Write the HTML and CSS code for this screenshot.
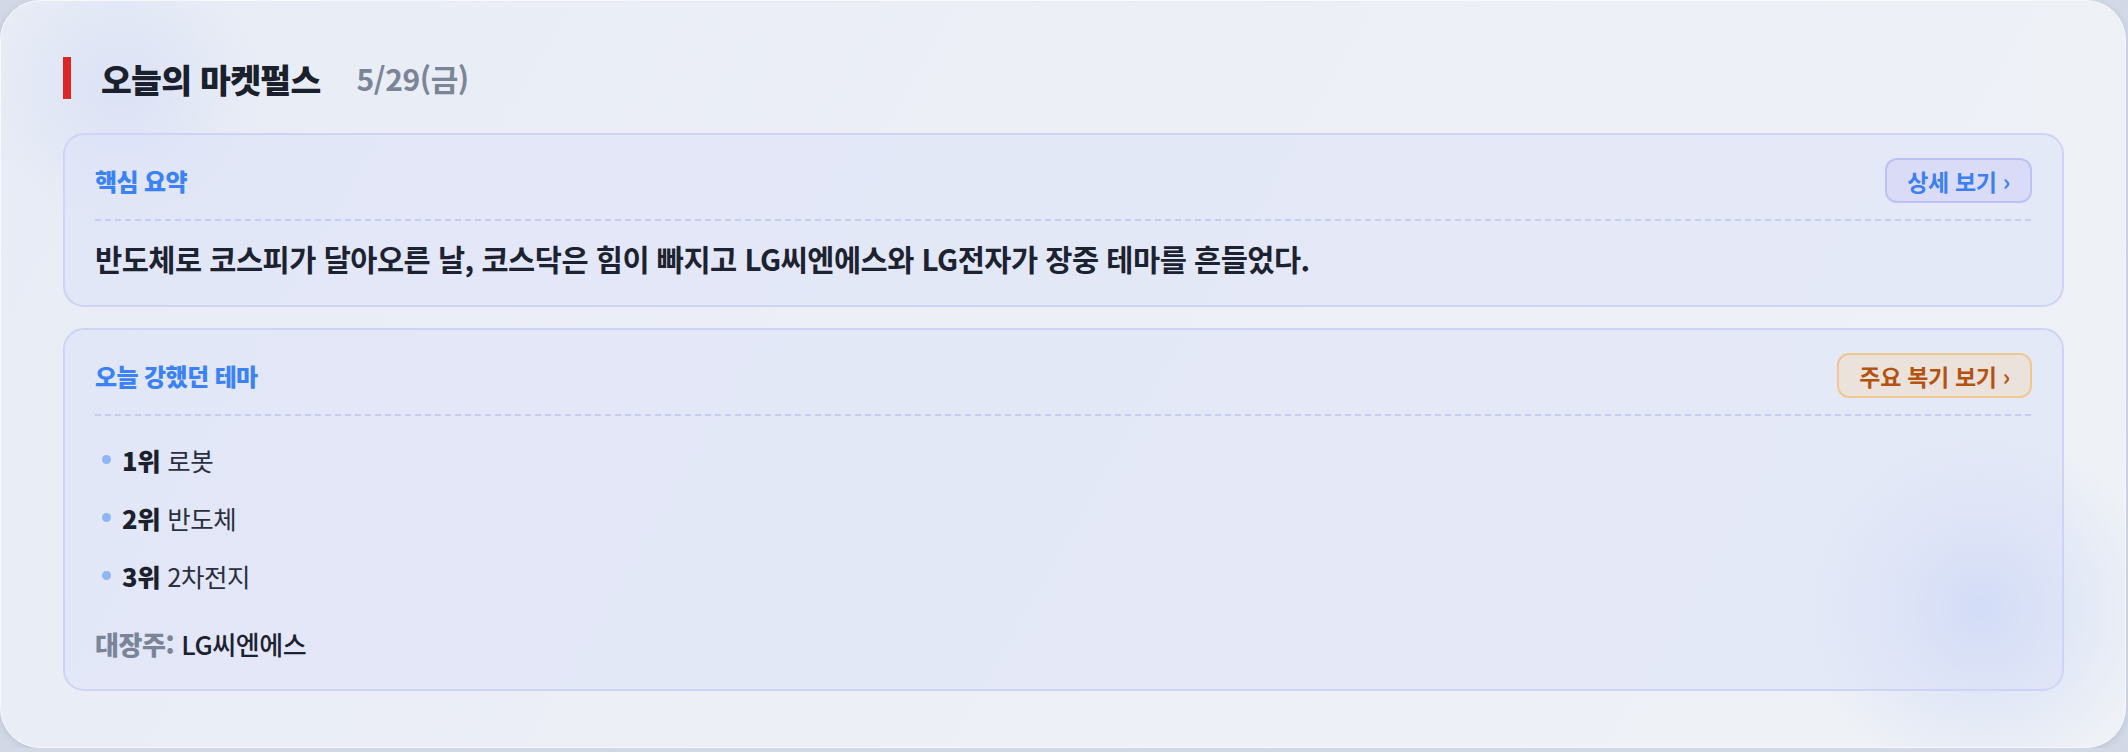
FILE: index.html
```html
<!DOCTYPE html>
<html lang="ko">
<head>
  <meta charset="UTF-8" />
  <meta name="viewport" content="width=device-width, initial-scale=1.0" />
  <title>오늘의 마켓펄스</title>
  <link rel="stylesheet" href="styles.css">
</head>
<body>
  <div class="pulse">
    <!-- 제목 -->
    <header class="pulse-head">
      <span class="mark"></span>
      <h1>오늘의 마켓펄스</h1>
      <span class="date">5/29(금)</span>
    </header>

    <!-- 핵심 요약 -->
    <section class="box box-summary">
      <div class="box-head">
        <h2>핵심 요약</h2>
        <a class="chip chip-blue" href="#">상세 보기 ›</a>
      </div>
      <p class="summary">반도체로 코스피가 달아오른 날, 코스닥은 힘이 빠지고 LG씨엔에스와 LG전자가 장중 테마를 흔들었다.</p>
    </section>

    <!-- 강세 테마 -->
    <section class="box box-theme">
      <div class="box-head">
        <h2>오늘 강했던 테마</h2>
        <a class="chip chip-amber" href="#">주요 복기 보기 ›</a>
      </div>
      <ul class="rank">
        <li><b>1위</b> 로봇</li>
        <li><b>2위</b> 반도체</li>
        <li><b>3위</b> 2차전지</li>
      </ul>
      <p class="leader"><span>대장주:</span> LG씨엔에스</p>
    </section>
  </div>
</body>
</html>
```

FILE: styles.css
```css
* { box-sizing: border-box; }
body {
  margin: 0;
  background: #d2d8e5;
  font-family: "Noto Sans CJK KR", "Noto Sans", sans-serif;
  color: #1c2230;
}
.pulse {
  width: 2126px;
  height: 748px;
  padding: 56px 61px 0 62px;
  border: 1px solid #f6f8fc;
  border-radius: 40px;
  background:
    radial-gradient(circle at 1980px 607px, rgba(196, 211, 246, 0.9) 0, rgba(210, 221, 247, 0.45) 90px, rgba(236, 239, 246, 0) 175px),
    radial-gradient(circle at 120px 90px, rgba(214, 222, 245, 0.7) 0, rgba(230, 235, 247, 0) 140px),
    linear-gradient(120deg, #e8ecf6 0%, #edf0f6 60%, #eef1f6 100%);
  box-shadow: 0 2px 6px rgba(90, 105, 140, 0.18);
}
/* 제목 */
.pulse-head {
  display: flex;
  align-items: center;
  height: 42px;
  margin-bottom: 34px;
}
.mark {
  width: 8px;
  height: 42px;
  background: #dc2626;
  margin-right: 30px;
}
.pulse-head h1 {
  margin: 0;
  font-size: 33.5px;
  font-weight: 800;
  letter-spacing: -0.7px;
  color: #1a202c;
}
.date {
  margin-left: 36px;
  font-size: 30px;
  font-weight: 700;
  color: #7a8598;
  letter-spacing: -0.4px;
}
/* 카드 */
.box {
  background: rgba(220, 226, 248, 0.55);
  border: 2px solid #cfd3f6;
  border-radius: 21px;
  padding: 23px 30px 0 30px;
  margin-bottom: 21px;
}
.box-summary { height: 174px; }
.box-theme { height: 363px; }
.box-head {
  display: flex;
  align-items: flex-start;
  justify-content: space-between;
  height: 63px;
  padding-bottom: 18px;
  background: repeating-linear-gradient(to right, #c8ccf4 0 6px, transparent 6px 10px) left bottom / 100% 2px no-repeat;
}
.box-head h2 {
  margin: 0;
  line-height: 45px;
  font-size: 24px;
  font-weight: 800;
  letter-spacing: -0.6px;
  color: #3b82f6;
}
.chip {
  display: inline-flex;
  align-items: center;
  height: 45px;
  padding: 0 20px;
  border-radius: 12px;
  font-size: 23px;
  font-weight: 700;
  text-decoration: none;
  letter-spacing: -0.3px;
}
.chip-blue {
  background: #dadcf7;
  border: 2px solid #bcc1f6;
  color: #3b7ff2;
}
.chip-amber {
  background: #ebe2dc;
  border: 2px solid #efc88f;
  color: #b4530f;
}
.summary {
  margin: 18px 0 0;
  font-size: 29.5px;
  font-weight: 700;
  line-height: 38px;
  letter-spacing: -0.5px;
  color: #1c2230;
}
/* 순위 목록 */
.rank {
  list-style: none;
  margin: 25px 0 0;
  padding: 0;
}
.rank li {
  display: flex;
  align-items: center;
  height: 36px;
  margin-bottom: 22px;
  font-size: 25.5px;
  letter-spacing: -0.4px;
  color: #2a3040;
}
.rank li:last-child { margin-bottom: 0; }
.rank li::before {
  content: "";
  width: 9px;
  height: 9px;
  border-radius: 50%;
  background: #8db6f4;
  margin: 0 11px 0 7px;
}
.rank li b {
  font-weight: 800;
  color: #1a202c;
  margin-right: 7px;
}
.leader {
  margin: 33px 0 0;
  line-height: 36px;
  font-size: 26px;
  font-weight: 500;
  letter-spacing: -0.4px;
  color: #1c2230;
}
.leader span {
  font-weight: 800;
  color: #7b8599;
}
```
